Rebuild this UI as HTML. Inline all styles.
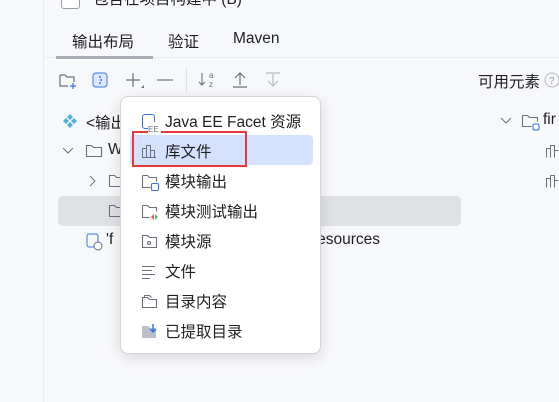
<!DOCTYPE html>
<html><head><meta charset="utf-8"><style>
body{margin:0;width:559px;height:402px;overflow:hidden;background:#f7f8fa;font-family:"Liberation Sans","Noto Sans CJK SC",sans-serif;font-size:15.5px;color:#1e1f22;position:relative}
.a{position:absolute;white-space:nowrap}
svg{position:absolute}
.menu{position:absolute;left:120px;top:96px;width:199px;height:256px;background:#fff;border:1px solid #d3d5db;border-radius:8px;box-shadow:0 4px 14px rgba(0,0,0,.12)}
.it{position:absolute;left:44px;font-size:15.5px}
</style></head><body>
<div class="a" style="left:43px;top:0;width:1px;height:402px;background:#ebecf0"></div>
<div class="a" style="left:61px;top:-10px;width:17px;height:17px;border:1px solid #9a9ca2;border-radius:3px;background:#fff"></div>
<div class="a" style="left:93px;top:-13px;">包含在项目构建中 (B)</div>
<div class="a" style="left:72px;top:30px">输出布局</div>
<div class="a" style="left:168px;top:30px">验证</div>
<div class="a" style="left:233px;top:30px">Maven</div>
<div class="a" style="left:44px;top:57px;width:515px;height:1px;background:#ebecf0"></div>
<div class="a" style="left:56px;top:56px;width:97px;height:3px;background:#a8abb2"></div>
<svg style="left:58px;top:71px" width="20" height="20" viewBox="0 0 20 20" fill="none" stroke="#6c707e" stroke-width="1.2"><path d="M2 4h5l2 2h7v5M2 4v11h8"/><path d="M15 12v6M12 15h6" stroke="#3574f0"/></svg>
<svg style="left:92px;top:72px" width="16" height="16"><rect x="1" y="1" width="14" height="14" rx="3" fill="#e0eaff" stroke="#3574f0"/><circle cx="8" cy="5" r="1" fill="#3574f0"/><circle cx="9" cy="8" r="1" fill="#3574f0"/><circle cx="8" cy="11" r="1" fill="#3574f0"/></svg>
<svg style="left:124px;top:71px" width="22" height="22" stroke="#6c707e" stroke-width="1.2"><path d="M9 2v14M2 9h14"/><path d="M17 17l3-3v3z" fill="#6c707e" stroke="none"/></svg>
<svg style="left:156px;top:71px" width="18" height="18" stroke="#6c707e" stroke-width="1.2"><path d="M1 9h16"/></svg>
<div class="a" style="left:186px;top:68px;width:1px;height:24px;background:#dfe1e5"></div>
<svg style="left:198px;top:70px" width="20" height="20" stroke="#6c707e" stroke-width="1.1" fill="none"><path d="M4 3v12M1 12l3 3 3-3"/><text x="11" y="8" font-size="8" fill="#6c707e" stroke="none" font-family="Liberation Sans">a</text><text x="11" y="17" font-size="8" fill="#6c707e" stroke="none" font-family="Liberation Sans">z</text></svg>
<svg style="left:231px;top:70px" width="18" height="20" stroke="#6c707e" stroke-width="1.2" fill="none"><path d="M9 3v12M4 8l5-5 5 5M2 17h14"/></svg>
<svg style="left:264px;top:70px" width="18" height="20" stroke="#b8bac0" stroke-width="1.2" fill="none"><path d="M9 4v12M4 11l5 5 5-5M2 3h14"/></svg>
<div class="a" style="left:478px;top:70px">可用元素</div>
<svg style="left:544px;top:72px" width="16" height="16"><circle cx="8" cy="8" r="7" fill="none" stroke="#b8bac0"/><text x="5" y="12" font-size="10" fill="#9a9ca2" font-family="Liberation Sans">?</text></svg>
<div class="a" style="left:58px;top:196px;width:403px;height:30px;background:#dfe1e5;border-radius:5px"></div>
<svg style="left:62px;top:113px" width="16" height="16"><path d="M8 1l3 3-3 3-3-3zM4 5l3 3-3 3-3-3zM12 5l3 3-3 3-3-3zM8 9l3 3-3 3-3-3z" fill="#4fb3d9"/></svg>
<div class="a" style="left:86px;top:111px">&lt;输出</div>
<svg style="left:62px;top:146px" width="12" height="10" fill="none" stroke="#6c707e"><path d="M1 2l5 5 5-5"/></svg>
<svg style="left:85px;top:143px" width="18" height="16" fill="none" stroke="#6c707e" stroke-width="1.1"><path d="M1.5 2.5h5l2 2h8v9h-15z"/></svg>
<div class="a" style="left:108px;top:141px">W</div>
<svg style="left:88px;top:175px" width="10" height="12" fill="none" stroke="#6c707e"><path d="M2 1l5 5-5 5"/></svg>
<svg style="left:108px;top:173px" width="14" height="16" fill="none" stroke="#6c707e" stroke-width="1.1"><path d="M1.5 2.5h5l2 2h8v9h-15z"/></svg>
<svg style="left:108px;top:203px" width="14" height="16" fill="none" stroke="#6c707e" stroke-width="1.1"><path d="M1.5 2.5h5l2 2h8v9h-15z"/></svg>
<svg style="left:86px;top:233px" width="18" height="18" fill="none"><rect x="1" y="1" width="11" height="13" rx="2" stroke="#3574f0"/><circle cx="12" cy="13" r="4" fill="#fff" stroke="#6c707e"/></svg>
<div class="a" style="left:106px;top:231px">'f</div>
<div class="a" style="left:312px;top:231px">resources</div>
<svg style="left:500px;top:116px" width="12" height="10" fill="none" stroke="#6c707e"><path d="M1 2l5 5 5-5"/></svg>
<svg style="left:521px;top:113px" width="22" height="18" fill="none" stroke="#6c707e" stroke-width="1.1"><path d="M1.5 2.5h5l2 2h8v4M1.5 2.5v11h9"/><rect x="12" y="11" width="6" height="6" rx="1.5" stroke="#3574f0" fill="#fff"/></svg>
<div class="a" style="left:543px;top:111px">fir</div>
<svg style="left:545px;top:143px" width="14" height="16" fill="none" stroke="#6c707e"><path d="M1.5 14.5v-9h4v9M5.5 14.5v-12h4v12M9.5 14.5v-7h4"/></svg>
<svg style="left:545px;top:173px" width="14" height="16" fill="none" stroke="#6c707e"><path d="M1.5 14.5v-9h4v9M5.5 14.5v-12h4v12M9.5 14.5v-7h4"/></svg>
<div class="menu">
<div class="a" style="left:9px;top:38px;width:183px;height:30px;background:#d5e2ff;border-radius:4px"></div>
<div class="a" style="left:11px;top:34px;width:111px;height:32px;border:2px solid #e5393b"></div>
<svg style="left:20px;top:16px" width="20" height="20" fill="none"><rect x="1.5" y="1.5" width="12" height="14" rx="2.5" stroke="#3574f0"/><rect x="7" y="9" width="13" height="11" fill="#fff"/><text x="7" y="19" font-size="8" fill="#6c707e" font-family="Liberation Sans">EE</text></svg>
<div class="it" style="top:13px">Java EE Facet 资源</div>
<svg style="left:20px;top:46px" width="16" height="16" fill="none" stroke="#6c707e"><path d="M1.5 14.5v-9h4v9M5.5 14.5v-12h4v12M9.5 14.5v-7h4v7zM1 14.5h14"/></svg>
<div class="it" style="top:43px">库文件</div>
<svg style="left:20px;top:76px" width="20" height="20" fill="none" stroke="#6c707e" stroke-width="1.1"><path d="M1.5 2.5h5l2 2h7v4M1.5 2.5v12h8"/><rect x="10.5" y="10.5" width="7" height="7" rx="1.5" stroke="#3574f0" fill="#fff"/></svg>
<div class="it" style="top:73px">模块输出</div>
<svg style="left:20px;top:106px" width="20" height="20" fill="none" stroke="#6c707e" stroke-width="1.1"><path d="M1.5 2.5h5l2 2h7v4M1.5 2.5v12h7"/><path d="M13 11l-3 3 3 3z" fill="#e55765" stroke="none"/><path d="M14 11l3 3-3 3z" fill="#5fb865" stroke="none"/></svg>
<div class="it" style="top:103px">模块测试输出</div>
<svg style="left:20px;top:136px" width="20" height="20" fill="none" stroke="#6c707e" stroke-width="1.1"><path d="M1.5 2.5h5l2 2h7v10h-14z"/><circle cx="8" cy="10" r="1.5"/></svg>
<div class="it" style="top:133px">模块源</div>
<svg style="left:20px;top:166px" width="16" height="16" stroke="#6c707e" stroke-width="1.1"><path d="M1 3.5h13M1 7.5h10M1 11.5h13M1 15.5h8"/></svg>
<div class="it" style="top:163px">文件</div>
<svg style="left:20px;top:196px" width="20" height="20" fill="none" stroke="#6c707e" stroke-width="1.1"><path d="M1.5 4.5h5l2 2h7v8h-14z M3.5 4.5v-2h5l2 2"/></svg>
<div class="it" style="top:193px">目录内容</div>
<svg style="left:20px;top:226px" width="20" height="20"><path d="M1 3h6l2 2h6v10H1z" fill="#b9c0c9"/><path d="M12 1v8M9 6l3 3 3-3" stroke="#3574f0" stroke-width="1.5" fill="none"/></svg>
<div class="it" style="top:223px">已提取目录</div>
</div>
</body></html>
